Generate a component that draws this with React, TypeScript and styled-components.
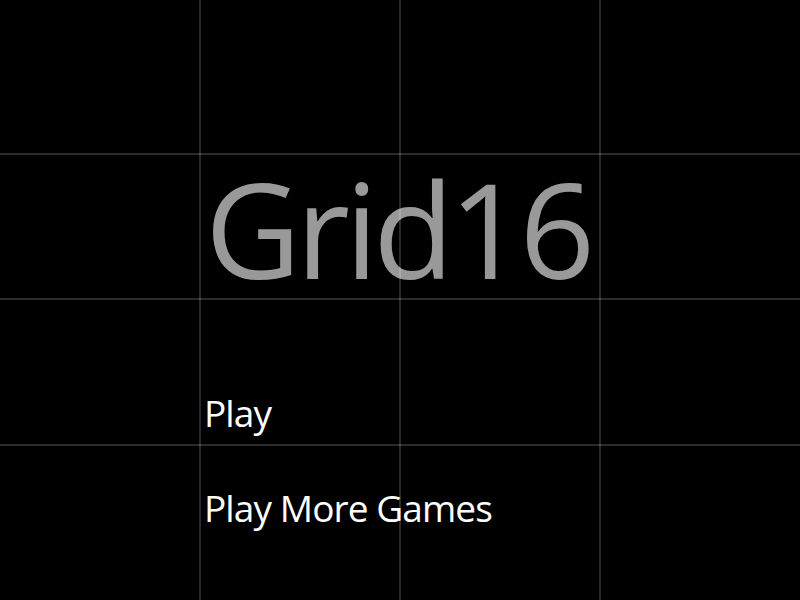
import React from 'react';
import styled, { createGlobalStyle } from 'styled-components';

const GlobalStyle = createGlobalStyle`
  html, body {
    margin: 0;
    padding: 0;
    background: #000;
  }
  body {
    font-family: "Open Sans", "Noto Sans", sans-serif;
  }
`;

const LINE = 'rgba(255, 255, 255, 0.17)';

const Screen = styled.div`
  position: relative;
  width: 800px;
  height: 600px;
  overflow: hidden;
  background: #000;
`;

const Board = styled.main`
  display: grid;
  grid-template-columns: repeat(4, 200px);
  grid-template-rows: 155px 145px 146px 154px;
  height: 100%;
`;

const Title = styled.h1`
  grid-column: 2 / 5;
  grid-row: 2;
  align-self: end;
  margin: 0 0 6px 5px;
  font-size: 132px;
  font-weight: 400;
  line-height: 1;
  letter-spacing: -5px;
  color: #999;
`;

const MenuItem = styled.a<{ $row: number; $drop: number }>`
  grid-column: 2 / 5;
  grid-row: ${p => p.$row};
  align-self: end;
  margin: 0 0 ${p => p.$drop}px 4px;
  font-size: 37px;
  line-height: 1;
  color: #fff;
  text-decoration: none;
  letter-spacing: -0.9px;
  cursor: pointer;
`;

// thin lines over everything, like the canvas grid in the picture
const GridLines = styled.div`
  position: absolute;
  inset: 0;
  pointer-events: none;
  background-image:
    linear-gradient(to right,
      transparent 199px, ${LINE} 199px, ${LINE} 201px, transparent 201px,
      transparent 399px, ${LINE} 399px, ${LINE} 401px, transparent 401px,
      transparent 599px, ${LINE} 599px, ${LINE} 601px, transparent 601px),
    linear-gradient(to bottom,
      transparent 153px, ${LINE} 153px, ${LINE} 155px, transparent 155px,
      transparent 298px, ${LINE} 298px, ${LINE} 300px, transparent 300px,
      transparent 444px, ${LINE} 444px, ${LINE} 446px, transparent 446px);
`;

export default function App() {
  return (
    <>
      <GlobalStyle />
      <Screen>
        <Board>
          <Title>Grid16</Title>
          <MenuItem $row={3} $drop={15}>Play</MenuItem>
          <MenuItem $row={4} $drop={74}>Play More Games</MenuItem>
        </Board>
        <GridLines />
      </Screen>
    </>
  );
}
